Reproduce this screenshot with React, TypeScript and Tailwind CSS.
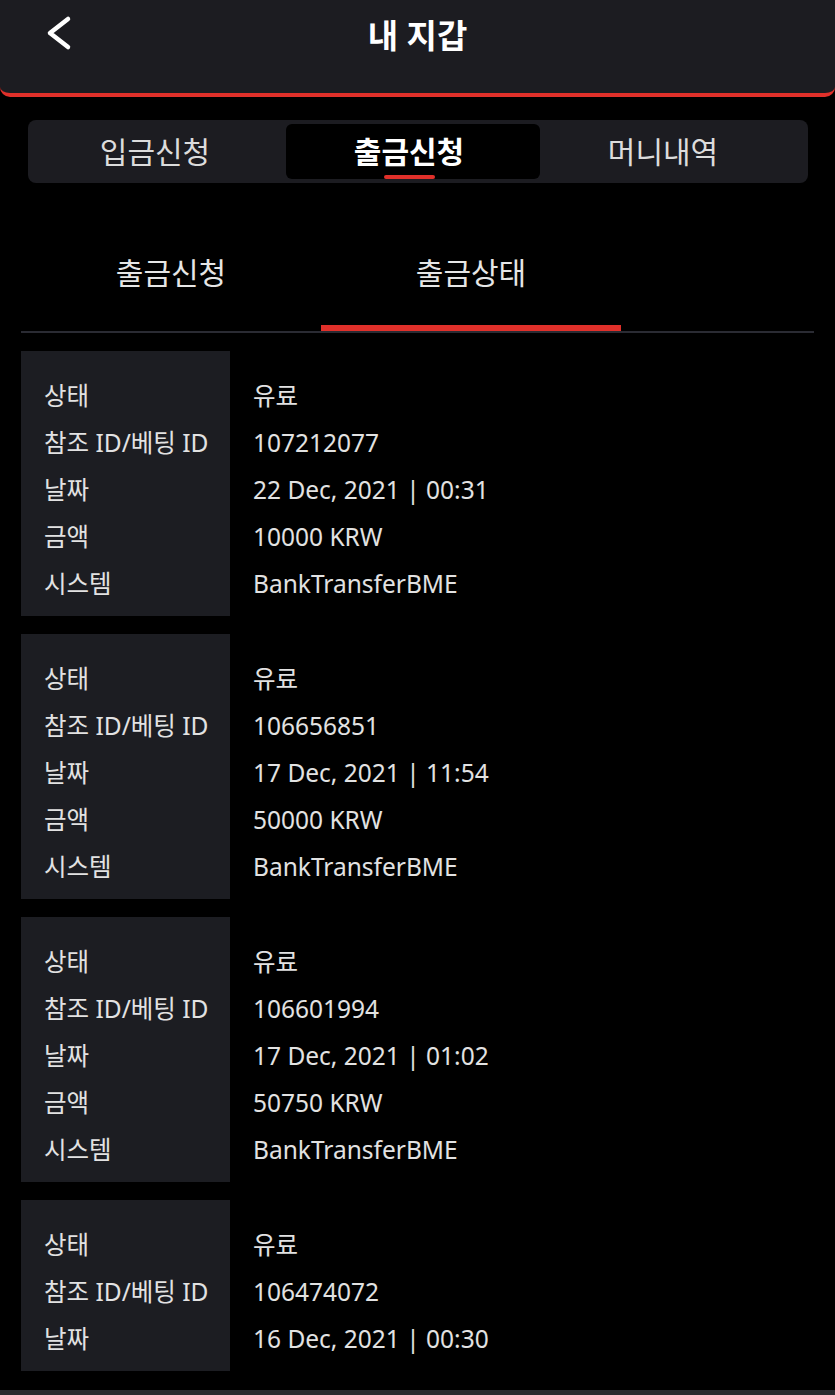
type Record = {
  status: string;
  refId: string;
  date: string;
  amount?: string;
  system?: string;
};

const records: Record[] = [
  { status: "유료", refId: "107212077", date: "22 Dec, 2021 | 00:31", amount: "10000 KRW", system: "BankTransferBME" },
  { status: "유료", refId: "106656851", date: "17 Dec, 2021 | 11:54", amount: "50000 KRW", system: "BankTransferBME" },
  { status: "유료", refId: "106601994", date: "17 Dec, 2021 | 01:02", amount: "50750 KRW", system: "BankTransferBME" },
  { status: "유료", refId: "106474072", date: "16 Dec, 2021 | 00:30" },
];

const font = { fontFamily: '"Noto Sans", "Noto Sans CJK KR", sans-serif' };

const RecordCard = ({ record }: { record: Record }) => {
  const rows = (
    [
      ["상태", record.status],
      ["참조 ID/베팅 ID", record.refId],
      ["날짜", record.date],
      ["금액", record.amount],
      ["시스템", record.system],
    ] as [string, string | undefined][]
  ).filter(([, v]) => v !== undefined);

  return (
    <div className="flex">
      <div className="w-[209px] bg-[#1c1d22] pl-[23px] pt-[21px] pb-[9px]">
        {rows.map(([label]) => (
          <div key={label} className="h-[47px] leading-[47px] text-[24.5px] text-[#e2e2e2] whitespace-nowrap">
            {label}
          </div>
        ))}
      </div>
      <div className="flex-1 pl-[23px] pt-[21px]">
        {rows.map(([label, value]) => (
          <div key={label} className="h-[47px] leading-[47px] text-[24.5px] text-[#e2e2e2] whitespace-nowrap">
            {value}
          </div>
        ))}
      </div>
    </div>
  );
};

const App = () => {
  return (
    <div className="min-h-[1395px] bg-black flex flex-col" style={font}>
      <header className="relative h-[97px] bg-[#1c1c21] border-b-[4px] border-[#e0302a] rounded-b-[10px] flex items-start justify-center">
        <button className="absolute left-[44px] top-[15px] text-white">
          <svg width="30" height="36" viewBox="0 0 30 36" fill="none">
            <polyline
              points="24,4 6,18 24,32"
              stroke="currentColor"
              strokeWidth="4.5"
              strokeLinecap="round"
              strokeLinejoin="round"
            />
          </svg>
        </button>
        <h1 className="mt-[15px] leading-[42px] text-[33px] font-bold text-white">내 지갑</h1>
      </header>

      <div className="ml-[28px] mr-[27px] mt-[23px] h-[63px] rounded-[8px] bg-[#1c1c21] pl-[4px] pr-[14px] py-[4px] flex">
        <div className="flex-1 flex items-center justify-center pr-[8px] text-[30px] text-[#dcdcdc]">입금신청</div>
        <div className="relative flex-1 flex items-center justify-center pr-[8px] rounded-[6px] bg-black text-[30px] font-bold text-white">
          출금신청
          <span className="absolute bottom-0 left-[98px] h-[4px] w-[51px] rounded-full bg-[#e0302a]" />
        </div>
        <div className="flex-1 flex items-center justify-center pr-[8px] text-[30px] text-[#dcdcdc]">머니내역</div>
      </div>

      <div className="mx-[21px] mt-[44px] flex border-b-[2px] border-[#2a2b33]">
        <div className="w-[300px] h-[104px] flex justify-center pt-[24px] leading-[44px] text-[30px] text-[#e6e6e6]">출금신청</div>
        <div className="relative w-[300px] h-[104px] flex justify-center pt-[24px] leading-[44px] text-[30px] text-[#e6e6e6]">
          출금상태
          <span className="absolute bottom-0 left-0 right-0 h-[6px] bg-[#e0302a]" />
        </div>
      </div>

      <div className="mx-[21px] mt-[18px] flex flex-col gap-[18px]">
        {records.map((r) => (
          <RecordCard key={r.refId} record={r} />
        ))}
      </div>

      <div className="mt-auto h-[5px] bg-[#2a2a2e]" />
    </div>
  );
};

export default App;
